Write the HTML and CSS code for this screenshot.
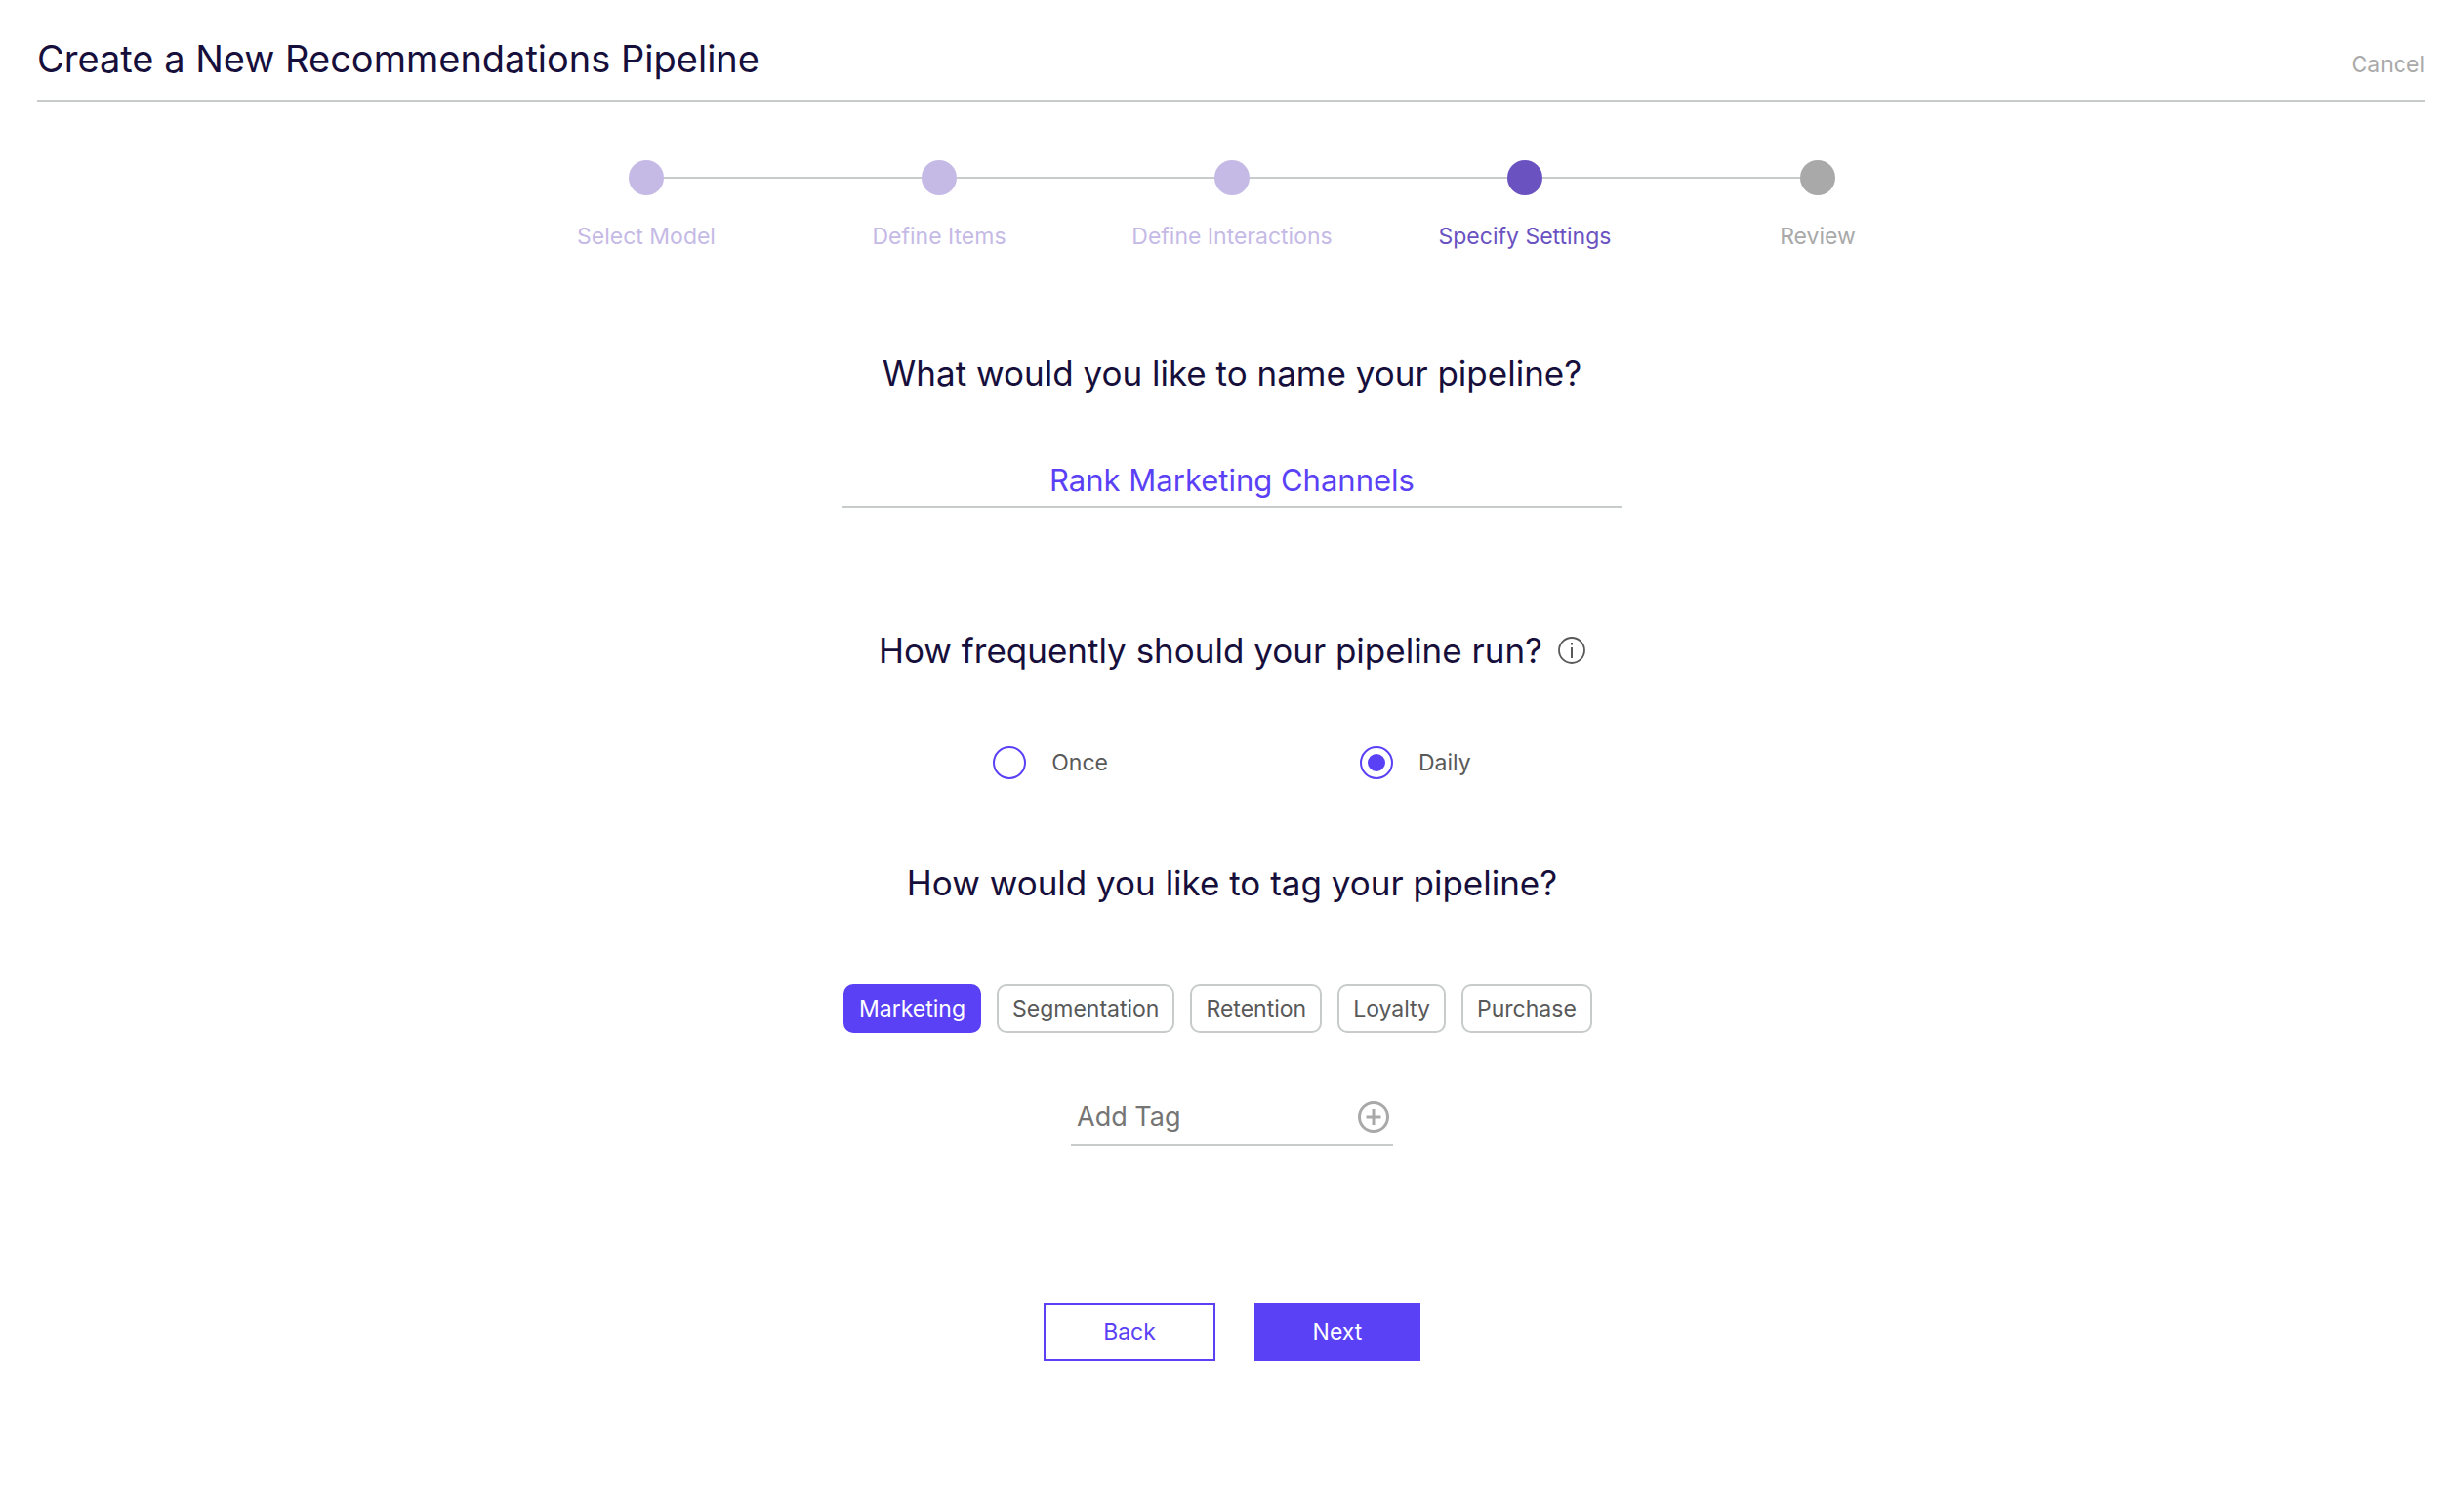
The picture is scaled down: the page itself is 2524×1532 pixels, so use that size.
FILE: index.html
```html
<!DOCTYPE html>
<html lang="en">
<head>
    <meta charset="UTF-8">
    <meta name="viewport" content="width=device-width, initial-scale=1.0">
    <title>Create a New Recommendations Pipeline</title>
    <link rel="stylesheet" href="styles.css">
</head>
<body>
    <header class="page-header">
        <h1>Create a New Recommendations Pipeline</h1>
        <a class="cancel" href="#">Cancel</a>
    </header>

    <ol class="steps">
        <li class="step done"><span class="track"><span class="dot"></span></span>Select Model</li>
        <li class="step done"><span class="track"><span class="dot"></span></span>Define Items</li>
        <li class="step done"><span class="track"><span class="dot"></span></span>Define Interactions</li>
        <li class="step active" aria-current="step"><span class="track"><span class="dot"></span></span>Specify Settings</li>
        <li class="step"><span class="track"><span class="dot"></span></span>Review</li>
    </ol>

    <form class="settings">
        <section class="name-section">
            <h2><label for="pipelineName">What would you like to name your pipeline?</label></h2>
            <input type="text" class="name-input" id="pipelineName" name="name" value="Rank Marketing Channels">
        </section>

        <section class="frequency-section">
            <h2 id="frequencyTitle">
                How frequently should your pipeline run?
                <svg class="info-icon" viewBox="0 0 28 28" aria-hidden="true">
                    <circle cx="14" cy="14" r="13" fill="none" stroke="currentColor" stroke-width="1.8"/>
                    <path d="M14 6v2.500M14 11v11" stroke="currentColor" stroke-width="2"/>
                </svg>
            </h2>
            <div class="options" role="radiogroup" aria-labelledby="frequencyTitle">
                <div class="option">
                    <input type="radio" id="once" name="frequency" value="once">
                    <label for="once">Once</label>
                </div>
                <div class="option">
                    <input type="radio" id="daily" name="frequency" value="daily" checked>
                    <label for="daily">Daily</label>
                </div>
            </div>
        </section>

        <section class="tag-section">
            <h2>How would you like to tag your pipeline?</h2>
            <div class="tags">
                <button type="button" class="tag selected" aria-pressed="true">Marketing</button>
                <button type="button" class="tag" aria-pressed="false">Segmentation</button>
                <button type="button" class="tag" aria-pressed="false">Retention</button>
                <button type="button" class="tag" aria-pressed="false">Loyalty</button>
                <button type="button" class="tag" aria-pressed="false">Purchase</button>
            </div>
            <div class="add-tag">
                <input type="text" name="tag" placeholder="Add Tag" aria-label="Add Tag">
                <button type="button" class="add-button" aria-label="Add">
                    <svg viewBox="0 0 32 32" aria-hidden="true">
                        <circle cx="16" cy="16" r="14.5" fill="none" stroke="currentColor" stroke-width="3"/>
                        <path d="M16 8v16M8.500 16h15" stroke="currentColor" stroke-width="3"/>
                    </svg>
                </button>
            </div>
        </section>

        <div class="actions">
            <button type="button" class="back">Back</button>
            <button type="submit" class="next">Next</button>
        </div>
    </form>
</body>
</html>
```
FILE: styles.css
```css
* {
    box-sizing: border-box;
}
body {
    margin: 0;
    padding: 36px 38px 40px;
    font-family: Inter, Arial, sans-serif;
    font-size: 23px;
    line-height: 32px;
    color: #595959;
    background-color: #fff;
}
h1, h2 {
    margin: 0;
    font-weight: normal;
    color: #170f3b;
}
h1 {
    font-size: 38px;
    line-height: 48px;
}
h2 {
    display: flex;
    align-items: center;
    justify-content: center;
    gap: 16px;
    font-size: 35px;
    line-height: 44px;
}
input, button {
    font-family: inherit;
    font-size: inherit;
    line-height: inherit;
}
button {
    cursor: pointer;
}
.page-header {
    display: flex;
    justify-content: space-between;
    align-items: flex-end;
    margin-right: 2px;
    padding-bottom: 18px;
    border-bottom: 2px solid #c7cbca;
}
.cancel {
    padding-bottom: 2px;
    color: #a9a9a9;
    text-decoration: none;
}

/* progress steps */
.steps {
    display: grid;
    grid-template-columns: repeat(5, 1fr);
    max-width: 1500px;
    margin: 60px auto 0;
    padding: 0;
    list-style: none;
    text-align: center;
    color: #a9a9a9;
}
.track {
    display: flex;
    align-items: center;
    margin-bottom: 26px;
}
.track::before, .track::after {
    content: "";
    flex: 1;
    height: 2px;
    background-color: #c7cbca;
}
.step:first-child .track::before,
.step:last-child .track::after {
    visibility: hidden;
}
.dot {
    width: 36px;
    height: 36px;
    border-radius: 50%;
    background-color: #a9a9a9;
}
.done {
    color: #c5bae6;
}
.done .dot {
    background-color: #c5bae6;
}
.active {
    color: #6a52c1;
}
.active .dot {
    background-color: #6a52c1;
}

/* form */
.settings {
    max-width: 800px;
    margin: 102px auto 0;
}
.name-input {
    display: block;
    width: 100%;
    height: 60px;
    margin-top: 56px;
    padding: 4px 0 0;
    border: none;
    border-bottom: 2px solid #c7cbca;
    background: none;
    font-size: 31px;
    text-align: center;
    color: #5a41f5;
}
.frequency-section {
    margin-top: 124px;
}
.info-icon {
    width: 28px;
    height: 28px;
    color: #595959;
}
.options {
    display: flex;
    justify-content: center;
    gap: 258px;
    margin-top: 76px;
}
.option {
    display: flex;
    align-items: center;
    gap: 26px;
}
.option input {
    display: grid;
    place-items: center;
    width: 34px;
    height: 34px;
    margin: 0;
    appearance: none;
    border: 2px solid #5a41f5;
    border-radius: 50%;
}
.option input:checked::before {
    content: "";
    width: 18px;
    height: 18px;
    border-radius: 50%;
    background-color: #5a41f5;
}
.tag-section {
    margin-top: 84px;
}
.tags {
    display: flex;
    flex-wrap: wrap;
    gap: 16px;
    margin: 82px 0 0 2px;
}
.tag {
    height: 50px;
    padding: 0 14px;
    border: 2px solid #c7cbca;
    border-radius: 10px;
    background-color: #fff;
    color: #595959;
}
.tag.selected {
    border-color: #5a41f5;
    background-color: #5a41f5;
    color: #fff;
}
.add-tag {
    display: flex;
    align-items: center;
    width: 330px;
    height: 62px;
    margin: 54px auto 0;
    padding: 4px 4px 0 6px;
    border-bottom: 2px solid #c7cbca;
}
.add-tag input {
    flex: 1;
    min-width: 0;
    padding: 0;
    border: none;
    background: none;
    font-size: 27px;
}
.add-tag input::placeholder {
    color: #757575;
}
.add-button {
    display: flex;
    padding: 0;
    border: none;
    background: none;
    color: #a9a9a9;
}
.add-button svg {
    width: 32px;
    height: 32px;
}
.actions {
    display: flex;
    justify-content: center;
    gap: 40px;
    margin-top: 160px;
}
.back, .next {
    height: 60px;
    border: 2px solid #5a41f5;
}
.back {
    width: 176px;
    background-color: #fff;
    color: #5a41f5;
}
.next {
    width: 170px;
    background-color: #5a41f5;
    color: #fff;
}
```
